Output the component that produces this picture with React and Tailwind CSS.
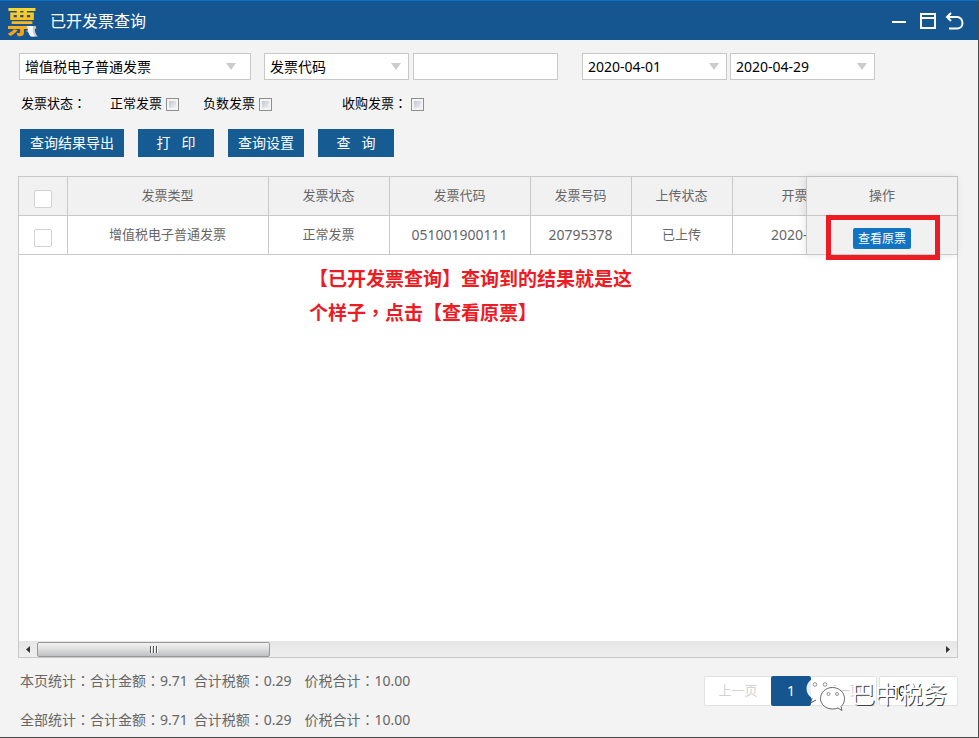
import { useState } from "react";

const columns = [
  { key: "type", title: "发票类型", width: "w-[201px]" },
  { key: "status", title: "发票状态", width: "w-[121px]" },
  { key: "code", title: "发票代码", width: "w-[141px]", numeric: true },
  { key: "number", title: "发票号码", width: "w-[101px]", numeric: true },
  { key: "upload", title: "上传状态", width: "w-[101px]" },
  { key: "date", title: "开票日期", width: "w-[151px]", numeric: true },
];

const invoices = [
  {
    id: 1,
    type: "增值税电子普通发票",
    status: "正常发票",
    code: "051001900111",
    number: "20795378",
    upload: "已上传",
    date: "2020-04-29",
  },
];

const totals = [
  { label: "本页统计", amount: "9.71", tax: "0.29", sum: "10.00" },
  { label: "全部统计", amount: "9.71", tax: "0.29", sum: "10.00" },
];

// full-width punctuation, centred in its cell
function Punct({ children }) {
  return (
    <span lang="zh-TW" className="font-['Noto_Sans_CJK_TC',sans-serif] leading-none">
      {children}
    </span>
  );
}

function Arrow({ className }) {
  return (
    <svg
      className={`pointer-events-none absolute top-[10px] h-[7px] w-[10px] ${className}`}
      viewBox="0 0 10 7"
    >
      <path d="M0 0H10L5 7Z" fill="#cccccc" />
    </svg>
  );
}

function SelectBox({ label, options, className, arrowClass }) {
  return (
    <div className={`relative h-[27px] shrink-0 ${className}`}>
      <select
        aria-label={label}
        className="h-full w-full appearance-none border border-[#c8c8c8] bg-white pl-[5px] pr-6 text-sm text-black outline-none"
      >
        {options.map((o) => (
          <option key={o}>{o}</option>
        ))}
      </select>
      <Arrow className={arrowClass} />
    </div>
  );
}

function DateBox({ label, value, onChange }) {
  return (
    <div className="relative h-[27px] w-[145px] shrink-0">
      <input
        type="text"
        aria-label={label}
        value={value}
        onChange={(e) => onChange(e.target.value)}
        className="h-full w-full border border-[#c8c8c8] bg-white pl-[5px] pr-6 text-sm text-black outline-none"
      />
      <Arrow className="right-2" />
    </div>
  );
}

function StateCheck({ label, colon, className }) {
  return (
    <label className={`flex items-center gap-1 ${className}`}>
      <span>
        {label}
        {colon && <Punct>：</Punct>}
      </span>
      <input
        type="checkbox"
        className="h-[13px] w-[13px] appearance-none border border-[#8e8f8f] bg-linear-to-br from-[#b4bac4] to-white shadow-[inset_0_0_0_2px_#f4f4f4] checked:bg-[#165b92]"
      />
    </label>
  );
}

function RowCheck({ label }) {
  return (
    <input
      type="checkbox"
      aria-label={label}
      className="mx-auto mt-[6px] block h-[18px] w-[18px] appearance-none rounded-xs border border-[#d2d2d2] bg-white checked:bg-[#165b92]"
    />
  );
}

function ActionButton({ children, className }) {
  return (
    <button
      type="button"
      className={`h-7 shrink-0 whitespace-pre bg-[#165b92] text-sm text-white hover:bg-[#1a6aa9] ${className}`}
    >
      {children}
    </button>
  );
}

function Logo() {
  return (
    <div className="relative h-8 w-8 shrink-0">
      <span className="block bg-linear-to-b from-[#ffdc2e] to-[#f79a10] bg-clip-text text-center text-[31px] font-bold leading-8 text-transparent">
        票
      </span>
      <svg className="absolute bottom-0 right-0 h-3 w-3" viewBox="0 0 12 12">
        <path d="M1 1H9C8.500 5 9 9 12 11.500H5C2 9 2.500 5 1 1Z" fill="#c3cad4" />
        <path d="M1 1H7C6.500 5 7 9 9 11.500H5C2 9 2.500 5 1 1Z" fill="#f4f6f8" />
      </svg>
    </div>
  );
}

function TitleBar() {
  return (
    <header className="flex h-10 items-center border-t border-[#0b70cc] bg-[#165690] pl-[6px] pr-[14px] text-white">
      <Logo />
      <h1 className="ml-3 text-base">已开发票查询</h1>
      <div className="ml-auto flex items-center">
        <button type="button" aria-label="最小化" className="mr-[14px]">
          <svg className="block h-4 w-[14px]" viewBox="0 0 14 16">
            <path d="M0 8H14V10H0Z" fill="#fff" />
          </svg>
        </button>
        <button type="button" aria-label="最大化" className="mr-[9px]">
          <svg className="block h-4 w-4" viewBox="0 0 16 16" fill="none" stroke="#fff" strokeWidth="2">
            <path d="M1 1H15V15H1ZM1 5H15" />
          </svg>
        </button>
        <button type="button" aria-label="返回">
          <svg className="block h-[18px] w-[19px]" viewBox="0 0 19 18" fill="none" stroke="#fff" strokeWidth="2">
            <path d="M6 1L2 5L6 9M2 5H12C15 5 17.500 7.500 17.500 11C17.500 14.500 15 16.500 12 16.500H4" />
          </svg>
        </button>
      </div>
    </header>
  );
}

function InvoiceTable() {
  return (
    <div className="flex text-[13px] text-[#666]">
      <div className="min-w-0 flex-1 overflow-hidden">
        <table className="w-[864px] table-fixed border-collapse text-center">
          <thead>
            <tr className="h-[38px] border-b border-[#c8c8c8] bg-[#f1f1f1]">
              <th className="w-12 border-r border-[#c8c8c8] p-0">
                <RowCheck label="全选" />
              </th>
              {columns.map((c) => (
                <th key={c.key} className={`border-r border-[#c8c8c8] p-0 font-normal ${c.width}`}>
                  {c.title}
                </th>
              ))}
            </tr>
          </thead>
          <tbody>
            {invoices.map((row) => (
              <tr key={row.id} className="h-[39px] border-b border-[#c8c8c8]">
                <td className="border-r border-[#c8c8c8] p-0">
                  <RowCheck label={`选择 ${row.number}`} />
                </td>
                {columns.map((c) => (
                  <td
                    key={c.key}
                    className={`border-r border-[#c8c8c8] p-0 ${c.numeric ? "text-sm" : ""}`}
                  >
                    {row[c.key]}
                  </td>
                ))}
              </tr>
            ))}
          </tbody>
        </table>
      </div>

      {/* fixed column on the right */}
      <table className="w-[151px] table-fixed border-collapse bg-[#f1f1f1] text-center shadow-[-1px_0_8px_rgba(0,0,0,0.1)]">
        <thead>
          <tr className="h-[38px] border-b border-l border-[#c8c8c8]">
            <th className="p-0 font-normal">操作</th>
          </tr>
        </thead>
        <tbody>
          {invoices.map((row) => (
            <tr key={row.id} className="h-[39px] border-b border-l border-[#c8c8c8]">
              <td className="relative p-0">
                <button
                  type="button"
                  className="mt-2 h-[21px] w-[58px] rounded-xs bg-[#1173c1] text-xs text-white"
                >
                  查看原票
                </button>
                <div className="pointer-events-none absolute -top-px left-[19px] h-[45px] w-[114px] border-5 border-[#ed1c24]" />
              </td>
            </tr>
          ))}
        </tbody>
      </table>
    </div>
  );
}

function ScrollBar() {
  return (
    <div className="mt-auto flex h-4 items-center bg-linear-to-b from-[#e6e6e6] to-[#efefef]">
      <button type="button" aria-label="向左滚动" className="flex w-[18px] shrink-0 justify-center">
        <svg className="h-[7px] w-1" viewBox="0 0 4 7">
          <path d="M4 0V7L0 3.500Z" fill="#333" />
        </svg>
      </button>
      <div className="flex h-[15px] w-[233px] items-center justify-center gap-px rounded-xs border border-[#979797] bg-linear-to-b from-[#f3f3f3] via-[#dcdcdc] to-[#bfc0c2]">
        <i className="h-[7px] w-[2px] border-r border-white bg-[#555]" />
        <i className="h-[7px] w-[2px] border-r border-white bg-[#555]" />
        <i className="h-[7px] w-[2px] border-r border-white bg-[#555]" />
      </div>
      <button type="button" aria-label="向右滚动" className="ml-auto flex w-[18px] shrink-0 justify-center">
        <svg className="h-[7px] w-1" viewBox="0 0 4 7">
          <path d="M0 0V7L4 3.500Z" fill="#333" />
        </svg>
      </button>
    </div>
  );
}

function Watermark() {
  return (
    <div className="pointer-events-none absolute top-0 left-[102px] flex items-center gap-[6px]">
      <svg className="h-9 w-[39px] shrink-0" viewBox="0 0 39 36">
        <path
          d="M14 1C6.500 1 0.500 6 0.500 12.500C0.500 16.500 2.500 20 6 22L4.500 27L10 24C18 26 28 21 28 12.500C28 6 22 1 14 1Z"
          fill="#fff"
          fillOpacity="0.900"
        />
        <path d="M6 22L4.500 27L10 24" fill="none" stroke="#555" />
        <circle cx="9" cy="8.500" r="1.800" fill="#fff" stroke="#777" strokeWidth="0.800" />
        <circle cx="19" cy="8.500" r="1.800" fill="#fff" stroke="#777" strokeWidth="0.800" />
        <path
          d="M26.500 11.500C19.500 11.500 14.500 16.500 14.500 22.500C14.500 28.500 20 33 26.500 33C28.500 33 30.500 32.500 32 32L36 34.500L35 30.500C37.500 28.500 38.500 25.500 38.500 22.500C38.500 16.500 33 11.500 26.500 11.500Z"
          fill="#fff"
          stroke="#555"
          strokeWidth="0.900"
        />
        <circle cx="22.500" cy="18" r="1.500" fill="#fff" stroke="#777" strokeWidth="0.800" />
        <circle cx="31" cy="18" r="1.500" fill="#fff" stroke="#777" strokeWidth="0.800" />
      </svg>
      <span className="whitespace-nowrap text-2xl text-white [text-shadow:1px_1px_0_#444]">
        巴中税务
      </span>
    </div>
  );
}

function Pagination() {
  return (
    <nav className="relative mt-[5px] flex h-[30px] w-[254px] shrink-0 text-[13px]">
      <button type="button" disabled className="w-[67px] rounded-l-xs border border-r-0 border-[#e2e2e2] bg-white text-[#d2d2d2]">
        上一页
      </button>
      <button type="button" className="w-10 rounded-xs bg-[#165690] text-sm text-white">
        1
      </button>
      <button type="button" disabled className="w-[66px] rounded-r-xs border border-l-0 border-[#e2e2e2] bg-white text-[#d2d2d2]">
        下一页
      </button>
      <select
        aria-label="每页条数"
        className="ml-[2px] min-w-0 flex-1 appearance-none rounded-xs border border-[#e2e2e2] bg-white pl-[10px] text-sm text-black outline-none"
      >
        <option>10</option>
        <option>20</option>
        <option>50</option>
      </select>
      <Watermark />
    </nav>
  );
}

export default function App() {
  const [start, setStart] = useState("2020-04-01");
  const [end, setEnd] = useState("2020-04-29");
  const [keyword, setKeyword] = useState("");

  return (
    <div
      lang="zh-CN"
      className="flex min-h-screen flex-col border-b border-r border-[#4a4a4a] bg-[#f3f3f3] font-['Noto_Sans','Noto_Sans_CJK_SC',sans-serif]"
    >
      <TitleBar />

      <main className="flex flex-1 flex-col pl-[18px] pr-5 pt-[13px]">
        {/* filters */}
        <div className="flex pl-px">
          <SelectBox
            label="发票种类"
            options={["增值税电子普通发票", "增值税普通发票", "增值税专用发票"]}
            className="w-[232px]"
            arrowClass="right-[15px]"
          />
          <SelectBox
            label="查询字段"
            options={["发票代码", "发票号码"]}
            className="ml-[13px] w-[145px]"
            arrowClass="right-2"
          />
          <input
            type="text"
            aria-label="查询内容"
            value={keyword}
            onChange={(e) => setKeyword(e.target.value)}
            className="ml-1 h-[27px] w-[145px] shrink-0 border border-[#c8c8c8] bg-white px-[5px] text-sm outline-none"
          />
          <div className="ml-6 flex gap-[3px]">
            <DateBox label="开始日期" value={start} onChange={setStart} />
            <DateBox label="结束日期" value={end} onChange={setEnd} />
          </div>
        </div>

        <div className="mt-[14px] flex h-5 items-center pl-[3px] text-[13px] text-black">
          <span>
            发票状态<Punct>：</Punct>
          </span>
          <StateCheck label="正常发票" className="ml-6" />
          <StateCheck label="负数发票" className="ml-6" />
          <StateCheck label="收购发票" colon className="ml-[70px]" />
        </div>

        <div className="mt-[15px] flex gap-[14px] pl-[2px]">
          <ActionButton className="w-[104px]">查询结果导出</ActionButton>
          <ActionButton className="w-[76px]">{"打   印"}</ActionButton>
          <ActionButton className="w-[76px]">查询设置</ActionButton>
          <ActionButton className="w-[76px]">{"查   询"}</ActionButton>
        </div>

        <section className="mt-[19px] flex flex-1 flex-col border border-[#c8c8c8] bg-white">
          <InvoiceTable />
          <p className="pl-[290px] pt-[7px] text-[19px] font-bold leading-[34px] text-[#ed1c24]">
            【已开发票查询】查询到的结果就是这
            <br />
            个样子<Punct>，</Punct>点击【查看原票】
          </p>
          <ScrollBar />
        </section>

        <footer className="flex justify-between pb-[7px] pt-[13px]">
          <div className="flex flex-col gap-[19px] pl-[2px] text-sm text-[#666]">
            {totals.map((t) => (
              <p key={t.label} className="flex h-5 leading-5">
                <span>
                  {t.label}
                  <Punct>：</Punct>合计金额<Punct>：</Punct>
                  {t.amount}
                </span>
                <span className="ml-[6px]">
                  合计税额<Punct>：</Punct>
                  {t.tax}
                </span>
                <span className="ml-[13px]">
                  价税合计<Punct>：</Punct>
                  {t.sum}
                </span>
              </p>
            ))}
          </div>
          <Pagination />
        </footer>
      </main>
    </div>
  );
}
